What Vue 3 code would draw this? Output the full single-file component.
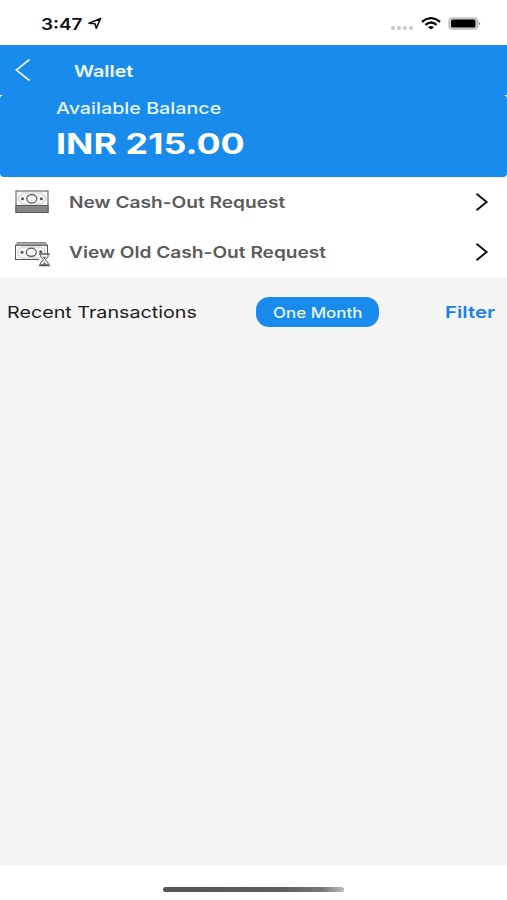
<script setup>
const rows = [
  { id: 'new', label: 'New Cash-Out Request' },
  { id: 'old', label: 'View Old Cash-Out Request' },
]
</script>

<template>
  <div class="screen">
    <div class="status">
      <span class="wide time">3:47</span>
      <svg class="loc" width="14" height="13" viewBox="0 0 14 13"><path d="M1 6.3 12.6 1.4 8.3 11.2 7 6.7Z" fill="none" stroke="#111" stroke-width="1.6" stroke-linejoin="round" /></svg>
      <div class="indicators">
        <svg width="24" height="6" viewBox="0 0 24 6" class="dots"><g fill="#c8c8c8"><circle cx="3" cy="3" r="2" /><circle cx="9" cy="3" r="2" /><circle cx="15" cy="3" r="2" /><circle cx="21" cy="3" r="2" /></g></svg>
        <svg width="20" height="13" viewBox="0 0 20 13" class="wifi"><g fill="none" stroke="#080808" stroke-width="2.3"><path d="M.9 4.8Q10-2.5 19.1 4.8" /><path d="M4.4 7.8Q10 3.2 15.6 7.8" /></g><path d="M7 10.2Q10 7.9 13 10.2L10 12.6Z" fill="#080808" /></svg>
        <svg width="33" height="13" viewBox="0 0 33 13"><rect x="1" y="1" width="28.6" height="11" rx="3.3" fill="#d8d8d8" stroke="#bcbcbc" stroke-width="1.4" /><rect x="3" y="2.6" width="24.5" height="8" rx="1.7" fill="#000" /><path d="M30.7 4.6Q33.8 6.5 30.7 8.4Z" fill="#999" /></svg>
      </div>
    </div>

    <header class="nav">
      <svg width="16" height="24" viewBox="0 0 16 24"><path d="M14.5 1.5 1.2 12 14.5 22.5" fill="none" stroke="#e8f6ff" stroke-width="1.6" /></svg>
      <span class="wide title">Wallet</span>
    </header>

    <div class="card-wrap">
      <section class="card">
        <span class="wide caption">Available Balance</span>
        <span class="wide amount">INR 215.00</span>
      </section>
    </div>

    <nav class="actions">
      <div v-for="row in rows" :key="row.id" class="row">
        <svg class="note" width="37" height="30" viewBox="0 0 37 30">
          <g v-if="row.id === 'new'" fill="none" stroke="#555" stroke-width="1">
            <rect x="2" y="4" width="32" height="21.5" fill="#f7f7f7" />
            <rect x="2" y="18.5" width="32" height="7" fill="#8c8c8c" />
            <path d="M2 21H34M2 23.2H34" stroke="#777" stroke-width=".7" />
            <path d="M4.5 9.5Q8 9.5 8 6H28Q28 9.5 31.5 9.5V13.5Q28 13.5 28 17H8Q8 13.5 4.5 13.5Z" stroke="#c4c4c4" stroke-width=".8" />
            <ellipse cx="17.8" cy="11.8" rx="5" ry="4.2" stroke-width="1.2" />
            <circle cx="8.5" cy="11.8" r="1.5" fill="#555" stroke="none" />
            <circle cx="27.3" cy="11.8" r="1.5" fill="#555" stroke="none" />
          </g>
          <g v-else fill="none" stroke="#555" stroke-width="1">
            <path d="M1.7 8.5 3.5 5.5H31.5L33.3 8.5Z" fill="#aaa" stroke="#888" />
            <rect x="1.5" y="8.3" width="32" height="14.2" fill="#f7f7f7" />
            <path d="M4 12.1Q7.3 12.1 7.3 10H27.5Q27.5 12.1 30.8 12.1V18.6Q27.5 18.6 27.5 20.8H7.3Q7.3 18.6 4 18.6Z" stroke="#c4c4c4" stroke-width=".8" />
            <ellipse cx="17.3" cy="15.3" rx="5" ry="4.1" stroke-width="1.2" />
            <circle cx="8" cy="15.3" r="1.5" fill="#555" stroke="none" />
            <circle cx="26.8" cy="14.7" r="1.5" fill="#555" stroke="none" />
            <path d="M25 16.5H36V29H25Z" fill="#fafafa" stroke="none" />
            <path d="M25 17H35.8M25 28.4H35.8" stroke-width="1.7" />
            <path d="M26.8 17.5V20L29.6 22.8 26.8 25.3V28M34 17.5V20L31.2 22.8 34 25.3V28" />
            <path d="M28.3 19.7H32.5L30.4 22.3ZM28 28 30.4 25.2 33 28Z" fill="#666" stroke="none" />
          </g>
        </svg>
        <span class="wide label">{{ row.label }}</span>
        <svg class="chevron" width="14" height="20" viewBox="0 0 14 20"><path d="M1.5 1.8 11.6 10 1.5 18.2" fill="none" stroke="#151515" stroke-width="2" /></svg>
      </div>
    </nav>

    <main class="history">
      <div class="toolbar">
        <span class="wide recent">Recent Transactions</span>
        <button class="period"><span class="wide month">One Month</span></button>
        <span class="wide filter">Filter</span>
      </div>
    </main>

    <footer class="home"><div class="bar"></div></footer>
  </div>
</template>

<style>
body {
  margin: 0;
}
</style>

<style scoped>
.screen {
  width: 507px;
  height: 900px;
  display: flex;
  flex-direction: column;
  overflow: hidden;
  background: #fff;
  font-family: Inter, "Liberation Sans", sans-serif;
}
.wide {
  display: block;
  white-space: nowrap;
  transform-origin: 0 50%;
  transform: scaleX(1.195);
}
.status {
  height: 45px;
  box-sizing: border-box;
  padding: 2px 26px 0 41px;
  display: flex;
  align-items: center;
}
.time {
  width: 47px;
  font-size: 16px;
  font-weight: 600;
  color: #111;
  transform: scaleX(1.18);
}
.indicators {
  margin-left: auto;
  display: flex;
  align-items: center;
}
.dots {
  margin: 8px 7px 0 0;
}
.wifi {
  margin-right: 7px;
}
.nav {
  height: 50px;
  padding-left: 15px;
  display: flex;
  align-items: center;
  background: #188bec;
}
.title {
  margin: 1px 0 0 42.5px;
  font-size: 16.5px;
  font-weight: 600;
  color: #f0faff;
}
.card-wrap {
  background: #fff;
}
.card {
  height: 82px;
  box-sizing: border-box;
  padding: 3px 0 0 56px;
  border-radius: 4px;
  background: #188bec;
}
.caption {
  font-size: 16.5px;
  line-height: 20px;
  font-weight: 500;
  color: #e6f6ff;
}
.amount {
  margin-top: 9px;
  font-size: 28px;
  line-height: 34px;
  font-weight: 700;
  color: #fff;
  transform: scaleX(1.28);
}
.row {
  height: 50px;
  box-sizing: border-box;
  padding: 0 18px 0 14px;
  display: flex;
  align-items: center;
}
.label {
  margin-left: 17.5px;
  font-size: 16px;
  font-weight: 600;
  color: #5b5b5b;
}
.chevron {
  margin-left: auto;
}
.history {
  flex: 1;
  background: #f5f5f5;
}
.toolbar {
  height: 70px;
  padding: 0 12px 0 7px;
  display: flex;
  align-items: center;
}
.recent {
  width: 249px;
  font-size: 16.5px;
  color: #1c1c1c;
}
.period {
  width: 123px;
  height: 30px;
  padding: 0 0 0 17px;
  border: 0;
  border-radius: 13px;
  background: #188bec;
  font-family: inherit;
}
.month {
  width: 80px;
  text-align: left;
  font-size: 14px;
  font-weight: 500;
  color: #e8f8ff;
  transform: scaleX(1.21);
}
.filter {
  width: 50px;
  margin-left: auto;
  font-size: 16.5px;
  font-weight: 600;
  color: #1a80ec;
  transform: scaleX(1.235);
}
.home {
  height: 34px;
  display: flex;
  justify-content: center;
}
.bar {
  width: 181px;
  height: 5px;
  margin-top: 21px;
  border-radius: 3px;
  background: linear-gradient(90deg, #555 0%, #5c5c5c 65%, #777 88%, #bbb 100%);
}
</style>
